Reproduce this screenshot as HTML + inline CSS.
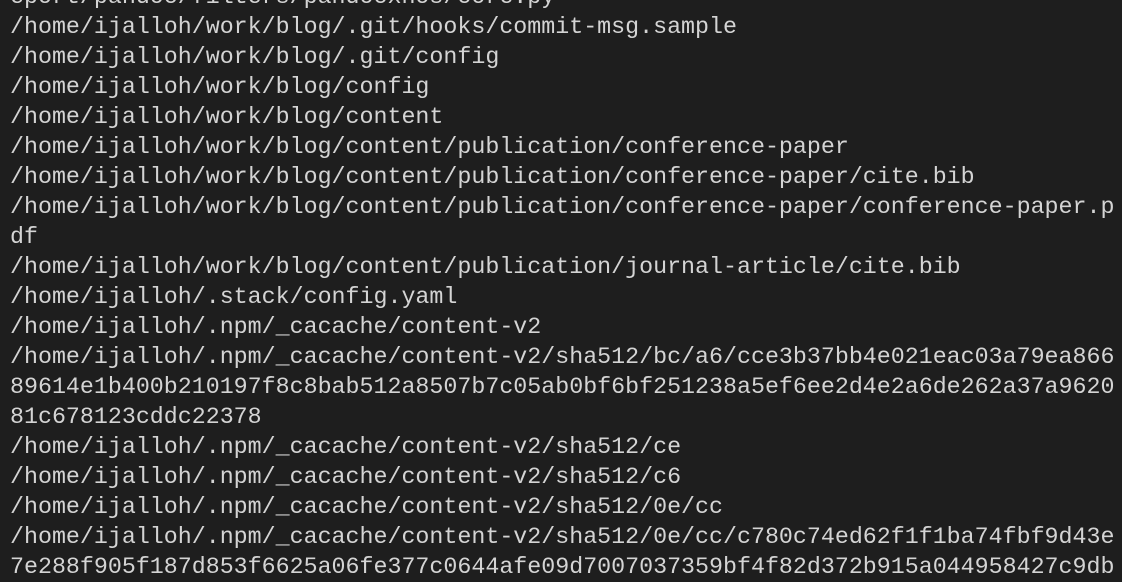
<!DOCTYPE html>
<html><head><style>
html,body{margin:0;background:#1e1e1e;width:1122px;height:566px;overflow:hidden}
pre{margin:0;position:absolute;left:10px;top:-18px;font-family:"Liberation Mono",monospace;font-size:23.3px;line-height:30px;color:#d4d4d4;white-space:pre}
</style></head><body><pre>eport/pandoc/filters/pandocxnos/core.py
/home/ijalloh/work/blog/.git/hooks/commit-msg.sample
/home/ijalloh/work/blog/.git/config
/home/ijalloh/work/blog/config
/home/ijalloh/work/blog/content
/home/ijalloh/work/blog/content/publication/conference-paper
/home/ijalloh/work/blog/content/publication/conference-paper/cite.bib
/home/ijalloh/work/blog/content/publication/conference-paper/conference-paper.p
df
/home/ijalloh/work/blog/content/publication/journal-article/cite.bib
/home/ijalloh/.stack/config.yaml
/home/ijalloh/.npm/_cacache/content-v2
/home/ijalloh/.npm/_cacache/content-v2/sha512/bc/a6/cce3b37bb4e021eac03a79ea866
89614e1b400b210197f8c8bab512a8507b7c05ab0bf6bf251238a5ef6ee2d4e2a6de262a37a9620
81c678123cddc22378
/home/ijalloh/.npm/_cacache/content-v2/sha512/ce
/home/ijalloh/.npm/_cacache/content-v2/sha512/c6
/home/ijalloh/.npm/_cacache/content-v2/sha512/0e/cc
/home/ijalloh/.npm/_cacache/content-v2/sha512/0e/cc/c780c74ed62f1f1ba74fbf9d43e
7e288f905f187d853f6625a06fe377c0644afe09d7007037359bf4f82d372b915a044958427c9db
</pre></body></html>
